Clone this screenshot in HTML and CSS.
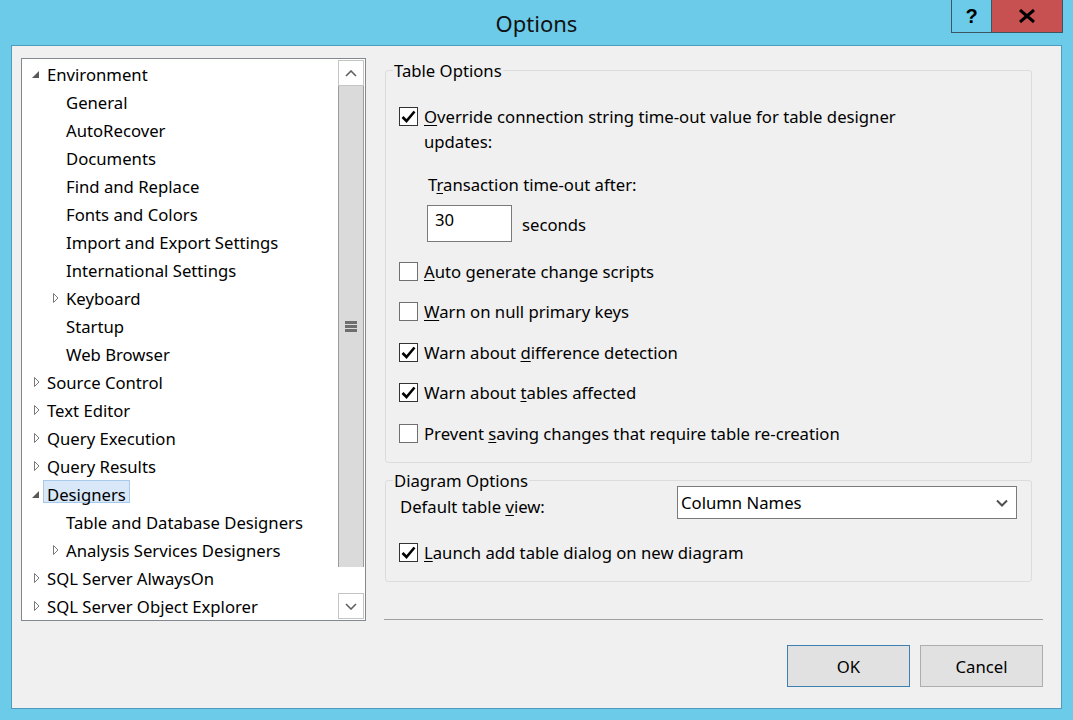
FILE: index.html
```html
<!DOCTYPE html>
<html>
<head>
<meta charset="utf-8">
<link rel="stylesheet" href="styles.css">
</head>
<body>
<div class="window">
  <div class="titlebar">
    <div class="title">Options</div>
    <div class="caption">
      <div class="cap-btn help">?</div>
      <div class="cap-btn close">
        <svg width="18" height="14" viewBox="0 0 18 14"><path d="M2 1 L16 13 M16 1 L2 13" stroke="#000" stroke-width="3" fill="none"/></svg>
      </div>
    </div>
  </div>
  <div class="client">
    <div class="main">
      <div class="tree">
        <div class="tree-list">
          <div class="row l0"><span class="tw"><svg class="exp" width="7" height="7"><path d="M7 0 L7 7 L0 7 Z" fill="#595959"/></svg></span><span class="lbl">Environment</span></div>
          <div class="row l1"><span class="tw"></span><span class="lbl">General</span></div>
          <div class="row l1"><span class="tw"></span><span class="lbl">AutoRecover</span></div>
          <div class="row l1"><span class="tw"></span><span class="lbl">Documents</span></div>
          <div class="row l1"><span class="tw"></span><span class="lbl">Find and Replace</span></div>
          <div class="row l1"><span class="tw"></span><span class="lbl">Fonts and Colors</span></div>
          <div class="row l1"><span class="tw"></span><span class="lbl">Import and Export Settings</span></div>
          <div class="row l1"><span class="tw"></span><span class="lbl">International Settings</span></div>
          <div class="row l1"><span class="tw"><svg class="col" width="6" height="10"><path d="M0.5 0.5 L5 5 L0.5 9.5 Z" fill="none" stroke="#7a7a7a"/></svg></span><span class="lbl">Keyboard</span></div>
          <div class="row l1"><span class="tw"></span><span class="lbl">Startup</span></div>
          <div class="row l1"><span class="tw"></span><span class="lbl">Web Browser</span></div>
          <div class="row l0"><span class="tw"><svg class="col" width="6" height="10"><path d="M0.5 0.5 L5 5 L0.5 9.5 Z" fill="none" stroke="#7a7a7a"/></svg></span><span class="lbl">Source Control</span></div>
          <div class="row l0"><span class="tw"><svg class="col" width="6" height="10"><path d="M0.5 0.5 L5 5 L0.5 9.5 Z" fill="none" stroke="#7a7a7a"/></svg></span><span class="lbl">Text Editor</span></div>
          <div class="row l0"><span class="tw"><svg class="col" width="6" height="10"><path d="M0.5 0.5 L5 5 L0.5 9.5 Z" fill="none" stroke="#7a7a7a"/></svg></span><span class="lbl">Query Execution</span></div>
          <div class="row l0"><span class="tw"><svg class="col" width="6" height="10"><path d="M0.5 0.5 L5 5 L0.5 9.5 Z" fill="none" stroke="#7a7a7a"/></svg></span><span class="lbl">Query Results</span></div>
          <div class="row l0"><span class="tw"><svg class="exp" width="7" height="7"><path d="M7 0 L7 7 L0 7 Z" fill="#595959"/></svg></span><span class="lbl sel">Designers</span></div>
          <div class="row l1"><span class="tw"></span><span class="lbl">Table and Database Designers</span></div>
          <div class="row l1"><span class="tw"><svg class="col" width="6" height="10"><path d="M0.5 0.5 L5 5 L0.5 9.5 Z" fill="none" stroke="#7a7a7a"/></svg></span><span class="lbl">Analysis Services Designers</span></div>
          <div class="row l0"><span class="tw"><svg class="col" width="6" height="10"><path d="M0.5 0.5 L5 5 L0.5 9.5 Z" fill="none" stroke="#7a7a7a"/></svg></span><span class="lbl">SQL Server AlwaysOn</span></div>
          <div class="row l0"><span class="tw"><svg class="col" width="6" height="10"><path d="M0.5 0.5 L5 5 L0.5 9.5 Z" fill="none" stroke="#7a7a7a"/></svg></span><span class="lbl">SQL Server Object Explorer</span></div>
        </div>
        <div class="scrollbar">
          <div class="sb-btn"><svg width="12" height="7"><path d="M1 6 L6 1 L11 6" fill="none" stroke="#606060" stroke-width="1.6"/></svg></div>
          <div class="sb-thumb"><span class="grip"></span><span class="grip"></span><span class="grip"></span></div>
          <div class="sb-track"></div>
          <div class="sb-btn down"><svg width="12" height="7"><path d="M1 1 L6 6 L11 1" fill="none" stroke="#606060" stroke-width="1.6"/></svg></div>
        </div>
      </div>
      <div class="right">
        <div class="group table-group">
          <div class="group-title">Table Options</div>
          <div class="cb-row multi">
            <span class="cb checked"><svg width="15" height="13" viewBox="0 0 15 13"><path d="M1.5 7 L5.5 11 L13.5 1.5" fill="none" stroke="#000" stroke-width="2.6"/></svg></span>
            <span class="cb-label"><u>O</u>verride connection string time-out value for table designer<br>updates:</span>
          </div>
          <div class="sub-label">T<u>r</u>ansaction time-out after:</div>
          <div class="input-row">
            <div class="textbox">30</div>
            <span class="unit">seconds</span>
          </div>
          <div class="cb-list">
            <div class="cb-row"><span class="cb"></span><span class="cb-label"><u>A</u>uto generate change scripts</span></div>
            <div class="cb-row"><span class="cb"></span><span class="cb-label"><u>W</u>arn on null primary keys</span></div>
            <div class="cb-row"><span class="cb checked"><svg width="15" height="13" viewBox="0 0 15 13"><path d="M1.5 7 L5.5 11 L13.5 1.5" fill="none" stroke="#000" stroke-width="2.6"/></svg></span><span class="cb-label">Warn about <u>d</u>ifference detection</span></div>
            <div class="cb-row"><span class="cb checked"><svg width="15" height="13" viewBox="0 0 15 13"><path d="M1.5 7 L5.5 11 L13.5 1.5" fill="none" stroke="#000" stroke-width="2.6"/></svg></span><span class="cb-label">Warn about <u>t</u>ables affected</span></div>
            <div class="cb-row"><span class="cb"></span><span class="cb-label">Prevent <u>s</u>aving changes that require table re-creation</span></div>
          </div>
        </div>
        <div class="group diagram-group">
          <div class="group-title">Diagram Options</div>
          <div class="view-row">
            <span class="view-label">Default table <u>v</u>iew:</span>
            <div class="combo"><span>Column Names</span><svg width="12" height="8"><path d="M1 1.5 L6 6.5 L11 1.5" fill="none" stroke="#505050" stroke-width="2"/></svg></div>
          </div>
          <div class="cb-row launch"><span class="cb checked"><svg width="15" height="13" viewBox="0 0 15 13"><path d="M1.5 7 L5.5 11 L13.5 1.5" fill="none" stroke="#000" stroke-width="2.6"/></svg></span><span class="cb-label"><u>L</u>aunch add table dialog on new diagram</span></div>
        </div>
        <div class="separator"></div>
      </div>
    </div>
    <div class="buttons">
      <button class="btn default">OK</button>
      <button class="btn">Cancel</button>
    </div>
  </div>
</div>
</body>
</html>
```

FILE: styles.css
```css
* { box-sizing: border-box; }
html, body { margin: 0; padding: 0; }
body {
  font-family: "Noto Sans", "Open Sans", sans-serif;
  font-size: 16.7px;
  color: #000;
  background: #6ccbe9;
}
u { text-decoration-thickness: 1px; text-underline-offset: 2px; }

.window {
  width: 1073px;
  height: 720px;
  background: #6ccbe9;
  padding: 0 11px 11px;
  display: flex;
  flex-direction: column;
}

.titlebar {
  height: 45px;
  display: grid;
  grid-template-columns: 1fr auto 1fr;
  align-items: start;
}
.title {
  grid-column: 2;
  font-size: 22px;
  line-height: 46px;
  color: #111;
}
.caption {
  grid-column: 3;
  justify-self: end;
  margin-right: -1px;
  display: flex;
  height: 33px;
  border: 1px solid #3b5563;
  border-top: 0;
}
.cap-btn {
  height: 32px;
  display: flex;
  align-items: center;
  justify-content: center;
}
.help {
  width: 40px;
  font-weight: bold;
  font-size: 20px;
  border-right: 1px solid #3b5563;
  font-family: "Liberation Sans", sans-serif;
}
.close {
  width: 70px;
  background: #c75050;
}

.client {
  flex: 1;
  background: #f0f0f0;
  border: 1px solid #4f9bbd;
  display: flex;
  flex-direction: column;
  padding: 12px 18px 21px 9px;
}
.main {
  display: flex;
  height: 563px;
}

/* tree */
.tree {
  width: 345px;
  border: 1px solid #828790;
  background: #fff;
  display: flex;
}
.tree-list {
  flex: 1;
  padding-top: 1px;
}
.row {
  height: 28px;
  display: flex;
  align-items: center;
  white-space: nowrap;
}
.row.l0 { padding-left: 6px; }
.row.l1 { padding-left: 25px; }
.tw {
  width: 15px;
  height: 28px;
  display: flex;
  align-items: center;
}
.tw .exp { margin-left: 4px; margin-top: 1px; }
.tw .col { margin-left: 6px; }
.lbl {
  padding: 2px 3px 0;
  border: 1px solid transparent;
  line-height: 22px;
}
.lbl.sel {
  background: #d9e8f9;
  border-color: #a9c9ec;
  margin-top: -5px;
  padding-top: 4px;
  height: 23px;
  line-height: 20px;
}

.scrollbar {
  width: 26px;
  margin-right: 1px;
  padding: 1px 0;
  display: flex;
  flex-direction: column;
}
.sb-btn {
  height: 26px;
  border: 1px solid #c4c4c4;
  background: #fff;
  display: flex;
  align-items: center;
  justify-content: center;
}
.sb-thumb {
  height: 481px;
  background: #dadada;
  border-left: 1px solid #9c9c9c;
  border-right: 1px solid #9c9c9c;
  display: flex;
  flex-direction: column;
  align-items: center;
  justify-content: center;
  gap: 1px;
}
.grip {
  width: 12px;
  height: 3px;
  background: #6e6e6e;
}
.sb-track { flex: 1; background: #fff; }

/* right panel */
.right {
  flex: 1;
  margin-left: 18px;
  display: flex;
  flex-direction: column;
}
.group {
  margin-left: 1px;
  width: 647px;
  border: 1px solid #dcdcdc;
  border-radius: 3px;
  display: flex;
  flex-direction: column;
}
.group-title {
  align-self: flex-start;
  margin: -11px 0 0 -7px;
  padding: 0 1px;
  height: 22px;
  line-height: 22px;
  background: #f0f0f0;
}
.table-group {
  margin-top: 12px;
  height: 393px;
  padding-left: 13px;
}
.table-group .group-title { margin-left: -6px; }
.cb-row {
  display: flex;
  align-items: center;
  height: 25px;
  line-height: 25px;
}
.cb-row.multi {
  align-items: flex-start;
  height: auto;
  margin-top: 22px;
}
.cb-row.multi .cb { margin-top: 3px; }
.cb {
  width: 19px;
  height: 19px;
  border: 1px solid #707070;
  background: #fff;
  margin-right: 6px;
  flex: none;
  display: flex;
  align-items: center;
  justify-content: center;
}
.cb.checked { border-color: #333; }
.sub-label {
  margin: 18px 0 0 29px;
  line-height: 25px;
}
.input-row {
  display: flex;
  align-items: center;
  margin: 8px 0 0 28px;
}
.textbox {
  width: 85px;
  height: 37px;
  border: 1px solid #7a7a7a;
  background: #fff;
  padding: 3px 0 0 7px;
  line-height: 22px;
}
.unit {
  margin-left: 10px;
  margin-top: 2px;
}
.cb-list {
  display: flex;
  flex-direction: column;
  gap: 15.5px;
  margin-top: 16.5px;
}

.diagram-group {
  margin-top: 17px;
  height: 102px;
  padding: 0 14px;
}
.diagram-group .group-title { margin-bottom: -6px; }
.view-row {
  display: flex;
  align-items: center;
}
.view-label {
  flex: 1;
  margin-top: 7px;
}
.combo {
  width: 340px;
  height: 33px;
  border: 1px solid #7a7a7a;
  background: #fff;
  display: flex;
  align-items: center;
  justify-content: space-between;
  padding: 0 8px 0 3px;
}
.cb-row.launch { margin-top: 20.5px; margin-left: -1px; }

.separator {
  margin-top: auto;
  margin-bottom: 1px;
  height: 1px;
  background: #a0a0a0;
}

.buttons {
  display: flex;
  justify-content: flex-end;
  gap: 10px;
  margin-top: 24px;
}
.btn {
  width: 123px;
  height: 42px;
  border: 1px solid #adadad;
  background: #e1e1e1;
  font: inherit;
  color: #000;
  padding: 0;
}
.btn.default { border-color: #3c7fb1; }
```
